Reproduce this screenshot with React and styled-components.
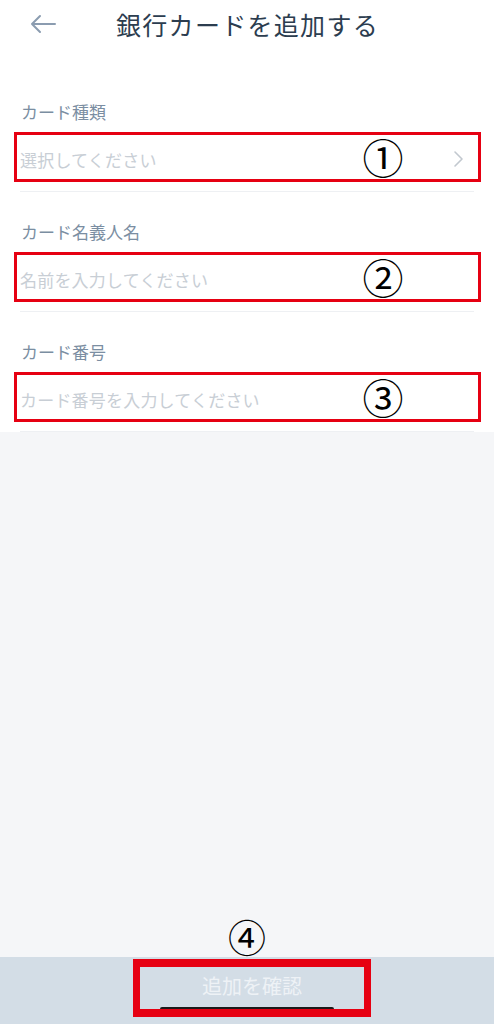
import React from 'react'
import styled, { createGlobalStyle } from 'styled-components'

const GlobalStyle = createGlobalStyle`
  html, body {
    margin: 0;
    padding: 0;
    background: #f5f6f8;
  }
  body {
    font-family: "Noto Sans CJK JP", "Noto Sans", sans-serif;
  }
`

const Screen = styled.div`
  width: 494px;
  height: 1024px;
  display: flex;
  flex-direction: column;
  background: #f5f6f8;
  overflow: hidden;
`

const Header = styled.header`
  height: 52px;
  display: flex;
  align-items: center;
  background: #fff;
  flex-shrink: 0;
`

const BackButton = styled.button`
  width: 116px;
  height: 52px;
  padding: 0 0 4px 29px;
  border: 0;
  background: none;
  display: flex;
  align-items: center;
`

const Title = styled.h1`
  margin: 0 0 4px;
  font-size: 25px;
  font-weight: 400;
  letter-spacing: 1.3px;
  color: #2c3d4f;
`

const Form = styled.div`
  background: #fff;
  padding-top: 20px;
  flex-shrink: 0;
`

const Section = styled.section`
  padding-top: 30px;
  display: flex;
  flex-direction: column;
`

const Label = styled.div`
  height: 20px;
  line-height: 20px;
  margin-left: 21px;
  font-size: 17px;
  color: #7b8ea2;
`

const Field = styled.div`
  position: relative;
  margin: 10px 13px 9px 14px;
  height: 50px;
  box-sizing: border-box;
  border: 3px solid #e60012;
  display: flex;
  align-items: center;
  padding: 4px 14px 0 3px;
`

const Placeholder = styled.span`
  flex: 1;
  font-size: 17px;
  letter-spacing: 0.2px;
  color: #c8ced5;
`

const Divider = styled.div`
  height: 1px;
  margin: 0 20px;
  background: #eef0f3;
`

const Mark = styled.span`
  position: absolute;
  left: ${p => p.$left}px;
  top: 48%;
  transform: translate(-50%, -50%);
  font-family: "Noto Sans CJK JP", "DejaVu Sans", sans-serif;
  font-size: 41px;
  line-height: 1;
  color: #000;
  pointer-events: none;
`

const Fill = styled.div`
  flex: 1;
  display: flex;
  flex-direction: column;
  justify-content: flex-end;
  align-items: center;
`

const FootMark = styled.span`
  font-family: "Noto Sans CJK JP", "DejaVu Sans", sans-serif;
  font-size: 38px;
  line-height: 1;
  margin: 0 0 2px 0;
  color: #000;
`

const BottomBar = styled.footer`
  height: 67px;
  background: #d3dde6;
  display: flex;
  justify-content: center;
  padding-top: 2px;
  box-sizing: border-box;
  flex-shrink: 0;
`

const ConfirmButton = styled.button`
  position: relative;
  width: 238px;
  height: 58px;
  margin-left: 10px;
  box-sizing: border-box;
  border: 8px solid #e60012;
  border-left-width: 7px;
  border-right-width: 7px;
  background: #d3dde6;
  font-family: "Noto Sans CJK JP", sans-serif;
  font-size: 20px;
  color: #eef2f6;
  padding: 0 0 6px;
`

const HomeIndicator = styled.span`
  position: absolute;
  left: 20px;
  bottom: 0;
  width: 174px;
  height: 2px;
  border-radius: 2px 2px 0 0;
  background: #1a1a1a;
`

const Chevron = () => (
  <svg width='12' height='18' viewBox='0 0 12 18' fill='none'>
    <path d='M3 2l7 7-7 7' stroke='#c2c8cf' strokeWidth='1.6' strokeLinecap='round' strokeLinejoin='round' />
  </svg>
)

const BackArrow = () => (
  <svg width='28' height='20' viewBox='0 0 28 20' fill='none'>
    <path d='M26 10H3M11 2L3 10l8 8' stroke='#8b9cb0' strokeWidth='2' strokeLinecap='round' strokeLinejoin='round' />
  </svg>
)

const fields = [
  { label: 'カード種類', placeholder: '選択してください', mark: '①', select: true },
  { label: 'カード名義人名', placeholder: '名前を入力してください', mark: '②' },
  { label: 'カード番号', placeholder: 'カード番号を入力してください', mark: '③' }
]

const App = () => (
  <Screen>
    <GlobalStyle />
    <Header>
      <BackButton aria-label='back'>
        <BackArrow />
      </BackButton>
      <Title>銀行カードを追加する</Title>
    </Header>
    <Form>
      {fields.map(f => (
        <Section key={f.label}>
          <Label>{f.label}</Label>
          <Field>
            <Placeholder>{f.placeholder}</Placeholder>
            {f.select && <Chevron />}
            <Mark $left={366}>{f.mark}</Mark>
          </Field>
          <Divider />
        </Section>
      ))}
    </Form>
    <Fill>
      <FootMark>④</FootMark>
    </Fill>
    <BottomBar>
      <ConfirmButton>
        追加を確認
        <HomeIndicator />
      </ConfirmButton>
    </BottomBar>
  </Screen>
)

export default App
